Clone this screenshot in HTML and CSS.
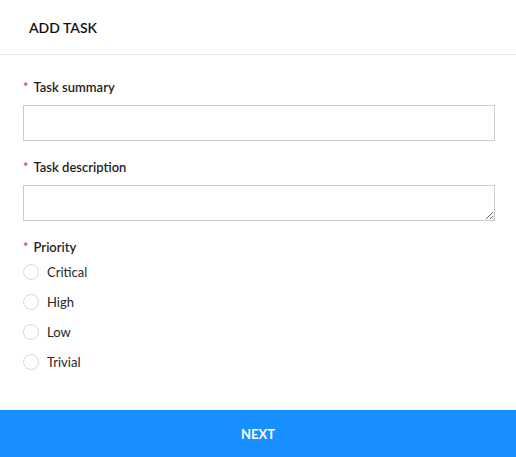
FILE: index.html
```html
<!DOCTYPE html>
<html lang="en">
<head>
    <meta charset="UTF-8">
    <meta name="viewport" content="width=device-width, initial-scale=1.0">
    <title>Add Task</title>
    <link rel="stylesheet" href="styles.css">
</head>
<body>
    <div class="panel">
        <header class="panel-header">
            <h1>ADD TASK</h1>
        </header>

        <form class="task-form" id="taskForm">
            <div class="field">
                <label class="field-label required" for="taskSummary">Task summary</label>
                <input type="text" id="taskSummary" class="text-input">
            </div>

            <div class="field">
                <label class="field-label required" for="taskDescription">Task description</label>
                <textarea id="taskDescription" class="text-input text-area"></textarea>
            </div>

            <div class="field">
                <span class="field-label required">Priority</span>
                <div class="radio-group">
                    <label class="radio-row"><input type="radio" name="priority" value="critical"><span class="radio-dot"></span>Critical</label>
                    <label class="radio-row"><input type="radio" name="priority" value="high"><span class="radio-dot"></span>High</label>
                    <label class="radio-row"><input type="radio" name="priority" value="low"><span class="radio-dot"></span>Low</label>
                    <label class="radio-row"><input type="radio" name="priority" value="trivial"><span class="radio-dot"></span>Trivial</label>
                </div>
            </div>
        </form>

        <button type="submit" form="taskForm" class="next-button">NEXT</button>
    </div>
</body>
</html>
```

FILE: styles.css
```css
body {
    margin: 0;
    padding: 0;
    font-family: Lato, "Open Sans", Arial, sans-serif;
    color: #1f1f1f;
    background-color: #fff;
}

.panel {
    width: 516px;
    height: 457px;
    display: flex;
    flex-direction: column;
}

.panel-header {
    height: 54px;
    border-bottom: 1px solid #e6e6e6;
    display: flex;
    align-items: center;
    padding: 0 29px;
}

.panel-header h1 {
    margin: 0;
    font-size: 14px;
    font-weight: 600;
    color: #111;
}

.task-form {
    padding: 22px 21px 0 23px;
    flex: 1;
}

.field {
    margin-bottom: 16px;
}

.field-label {
    display: block;
    height: 20px;
    line-height: 20px;
    font-size: 13px;
    font-weight: 600;
    color: #1f1f1f;
    margin-bottom: 8px;
}

.field-label.required::before {
    content: "*";
    color: #f5222d;
    margin-right: 5px;
    font-weight: 400;
}

.text-input {
    display: block;
    box-sizing: border-box;
    width: 100%;
    height: 36px;
    margin: 0;
    border: 1px solid #cccccc;
    border-radius: 0;
    padding: 6px 10px;
    font-family: inherit;
    font-size: 13px;
    outline: none;
}

.text-area {
    resize: vertical;
}

.radio-group {
    margin-top: -8px;
}

.radio-row {
    display: flex;
    align-items: center;
    height: 30px;
    font-size: 13px;
    color: #262626;
    cursor: pointer;
}

.radio-row input {
    display: none;
}

.radio-dot {
    box-sizing: border-box;
    width: 16px;
    height: 16px;
    border: 1px solid #d9d9d9;
    border-radius: 50%;
    margin-right: 8px;
}

.radio-row input:checked + .radio-dot {
    border: 5px solid #1890ff;
}

.next-button {
    height: 47px;
    width: 100%;
    border: none;
    background-color: #1890ff;
    color: #fff;
    font-family: inherit;
    font-size: 13px;
    font-weight: 700;
    cursor: pointer;
}
```
